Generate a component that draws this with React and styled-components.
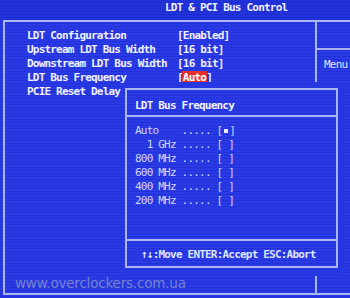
import React from 'react'
import styled, { createGlobalStyle } from 'styled-components'

const Global = createGlobalStyle`
  html, body { margin: 0; padding: 0; background: #2434dc; }
  body { width: 350px; height: 298px; overflow: hidden; }
`

const line = '#aab6f0'
const bg = '#2636e0'
const mono = `"DejaVu Sans Mono", "Liberation Mono", monospace`

const Screen = styled.div`
  position: relative;
  width: 350px;
  height: 298px;
  overflow: hidden;
  display: flex;
  flex-direction: column;
  font-family: ${mono};
  font-size: 11px;
  letter-spacing: -0.8px;
  color: #eef0ff;
  background: repeating-linear-gradient(#2a3be6 0 2px, #2232d8 2px 3px);
`

const Header = styled.div`
  height: 20px;
  padding-left: 165px;
  line-height: 15px;
  font-weight: bold;
  background: repeating-linear-gradient(#2333da 0 2px, #1e2dcf 2px 3px);
`

const Frame = styled.div`
  margin-left: 3px;
  height: 271px;
  border: 2px solid ${line};
  border-right: none;
  display: grid;
  grid-template-columns: 1fr 35px;
`

const Settings = styled.div`
  padding: 7px 0 0 22px;
`

const Row = styled.div`
  display: grid;
  grid-template-columns: 150px auto;
  justify-content: start;
  line-height: 14px;
  font-weight: bold;
`

const Value = styled.span`
  white-space: pre;
`

const Selected = styled.span`
  background: #e2302c;
  color: #fff;
  padding: 0 1px;
  margin: 0 -1px;
`

const Help = styled.div`
  border-left: 2px solid ${line};
  display: flex;
  flex-direction: column;
`

const HelpTop = styled.div`
  height: 26px;
  border-bottom: 2px solid ${line};
`

const HelpText = styled.div`
  padding: 8px 0 0 7px;
  line-height: 14px;
  color: #dfe4ff;
`

const Popup = styled.div`
  position: absolute;
  left: 125px;
  top: 88px;
  width: 209px;
  height: 176px;
  border: 2px solid ${line};
  background: repeating-linear-gradient(#2a3be6 0 2px, #2232d8 2px 3px);
  box-shadow: 0 -6px 0 0 ${bg}, 0 8px 0 0 ${bg}, 5px 0 0 0 ${bg};
  display: flex;
  flex-direction: column;
`

const PopupTitle = styled.div`
  height: 27px;
  padding: 9px 0 0 8px;
  box-sizing: border-box;
  line-height: 14px;
  font-weight: bold;
  border-bottom: 2px solid ${line};
`

const Options = styled.div`
  flex: 1;
  padding: 7px 0 0 8px;
  color: #cfd6fb;
`

const Option = styled.div`
  line-height: 14px;
  white-space: pre;
`

const Mark = styled.span`
  display: inline-block;
  width: 4px;
  height: 4px;
  margin: 0 1px 1px 2px;
  background: #e8ecff;
`

const Footer = styled.div`
  border-top: 2px solid ${line};
  height: 25px;
  padding-left: 14px;
  line-height: 28px;
  color: #dfe4ff;
  font-weight: bold;
`

const Watermark = styled.div`
  position: absolute;
  left: 15px;
  top: 275px;
  font-family: "DejaVu Sans", Verdana, sans-serif;
  font-size: 13.5px;
  letter-spacing: -0.2px;
  color: #7583cf;
`

const settings = [
  ['LDT Configuration', '[Enabled]'],
  ['Upstream LDT Bus Width', '[16 bit]'],
  ['Downstream LDT Bus Width', '[16 bit]'],
  ['LDT Bus Frequency', null],
  ['PCIE Reset Delay', ''],
]

const options = ['Auto   ', '  1 GHz', '800 MHz', '600 MHz', '400 MHz', '200 MHz']

export default function App() {
  return (
    <Screen>
      <Global />
      <Header>LDT &amp; PCI Bus Control</Header>
      <Frame>
        <Settings>
          {settings.map(([label, value]) => (
            <Row key={label}>
              <span>{label}</span>
              <Value>
                {value === null ? (
                  <>[<Selected>Auto</Selected>]</>
                ) : value}
              </Value>
            </Row>
          ))}
        </Settings>
        <Help>
          <HelpTop />
          <HelpText>Menu</HelpText>
        </Help>
      </Frame>
      <Popup>
        <PopupTitle>LDT Bus Frequency</PopupTitle>
        <Options>
          {options.map((o, i) => (
            <Option key={o}>
              {o} ..... [{i === 0 ? <Mark /> : ' '}]
            </Option>
          ))}
        </Options>
        <Footer>↑↓:Move ENTER:Accept ESC:Abort</Footer>
      </Popup>
      <Watermark>www.overclockers.com.ua</Watermark>
    </Screen>
  )
}
